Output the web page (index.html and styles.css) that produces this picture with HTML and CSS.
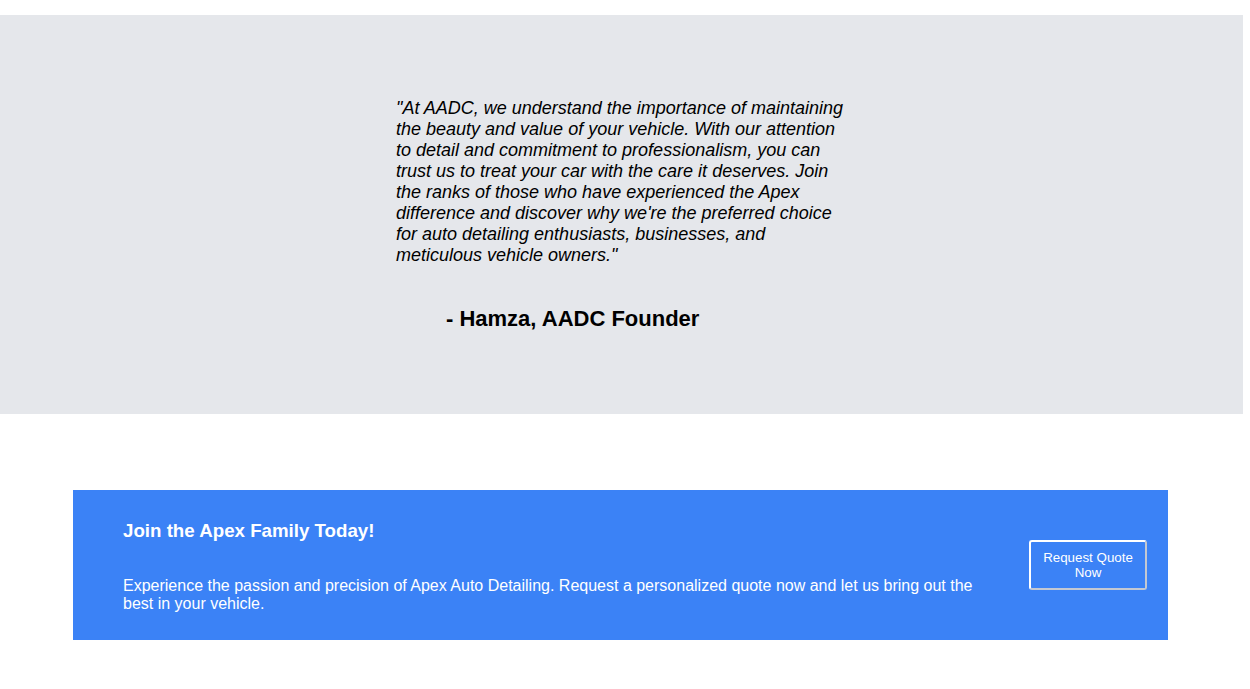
FILE: index.html
```html
<!DOCTYPE html>
<html lang="en">
<head>
<meta charset="utf-8">
<title>AADC</title>
<link rel="stylesheet" href="styles.css">
</head>
<body>
<section class="founder">
  <div class="founder-inner">
    <p class="quote">"At AADC, we understand the importance of maintaining the beauty and value of your vehicle. With our attention to detail and commitment to professionalism, you can trust us to treat your car with the care it deserves. Join the ranks of those who have experienced the Apex difference and discover why we're the preferred choice for auto detailing enthusiasts, businesses, and meticulous vehicle owners."</p>
    <p class="author">- Hamza, AADC Founder</p>
  </div>
</section>
<section class="cta">
  <div class="cta-text">
    <h3 class="cta-title">Join the Apex Family Today!</h3>
    <p class="cta-desc">Experience the passion and precision of Apex Auto Detailing. Request a personalized quote now and let us bring out the best in your vehicle.</p>
  </div>
  <button class="cta-btn" type="button">Request Quote Now</button>
</section>
</body>
</html>
```
FILE: styles.css
```css
html, body {
  margin: 0;
  padding: 0;
  background: #ffffff;
  font-family: "Liberation Sans", Arial, sans-serif;
}

.founder {
  margin-top: 15px;
  width: 1243px;
  height: 399px;
  background: #e5e7eb;
  box-sizing: border-box;
  padding-top: 83px;
}

.founder-inner {
  width: 448px;
  margin-left: 396px;
}

.quote {
  margin: 0;
  font-size: 18px;
  font-style: italic;
  color: #000;
}

.author {
  margin: 40px 0 0 50px;
  font-size: 22px;
  font-weight: bold;
  color: #000;
}

.cta {
  margin: 76px 0 0 73px;
  width: 1095px;
  height: 150px;
  background: #3b82f6;
  color: #fff;
  display: flex;
  align-items: center;
  box-sizing: border-box;
  padding: 0 21px 0 50px;
}

.cta-text {
  width: 880px;
  align-self: flex-start;
  padding-top: 30px;
}

.cta-title {
  margin: 0;
  font-size: 18.72px;
  font-weight: bold;
}

.cta-desc {
  margin: 35px 0 0;
  font-size: 16px;
}

.cta-btn {
  margin-left: auto;
  width: 118px;
  padding: 8px 12px;
  background: transparent;
  color: #fff;
  border: 2px solid;
  border-color: #ffffff #c3c8d2 #c3c8d2 #ffffff;
  border-radius: 3px;
  font-family: "Liberation Sans", Arial, sans-serif;
  font-size: 13.333px;
  line-height: 15px;
  text-align: center;
  box-sizing: border-box;
}
```
